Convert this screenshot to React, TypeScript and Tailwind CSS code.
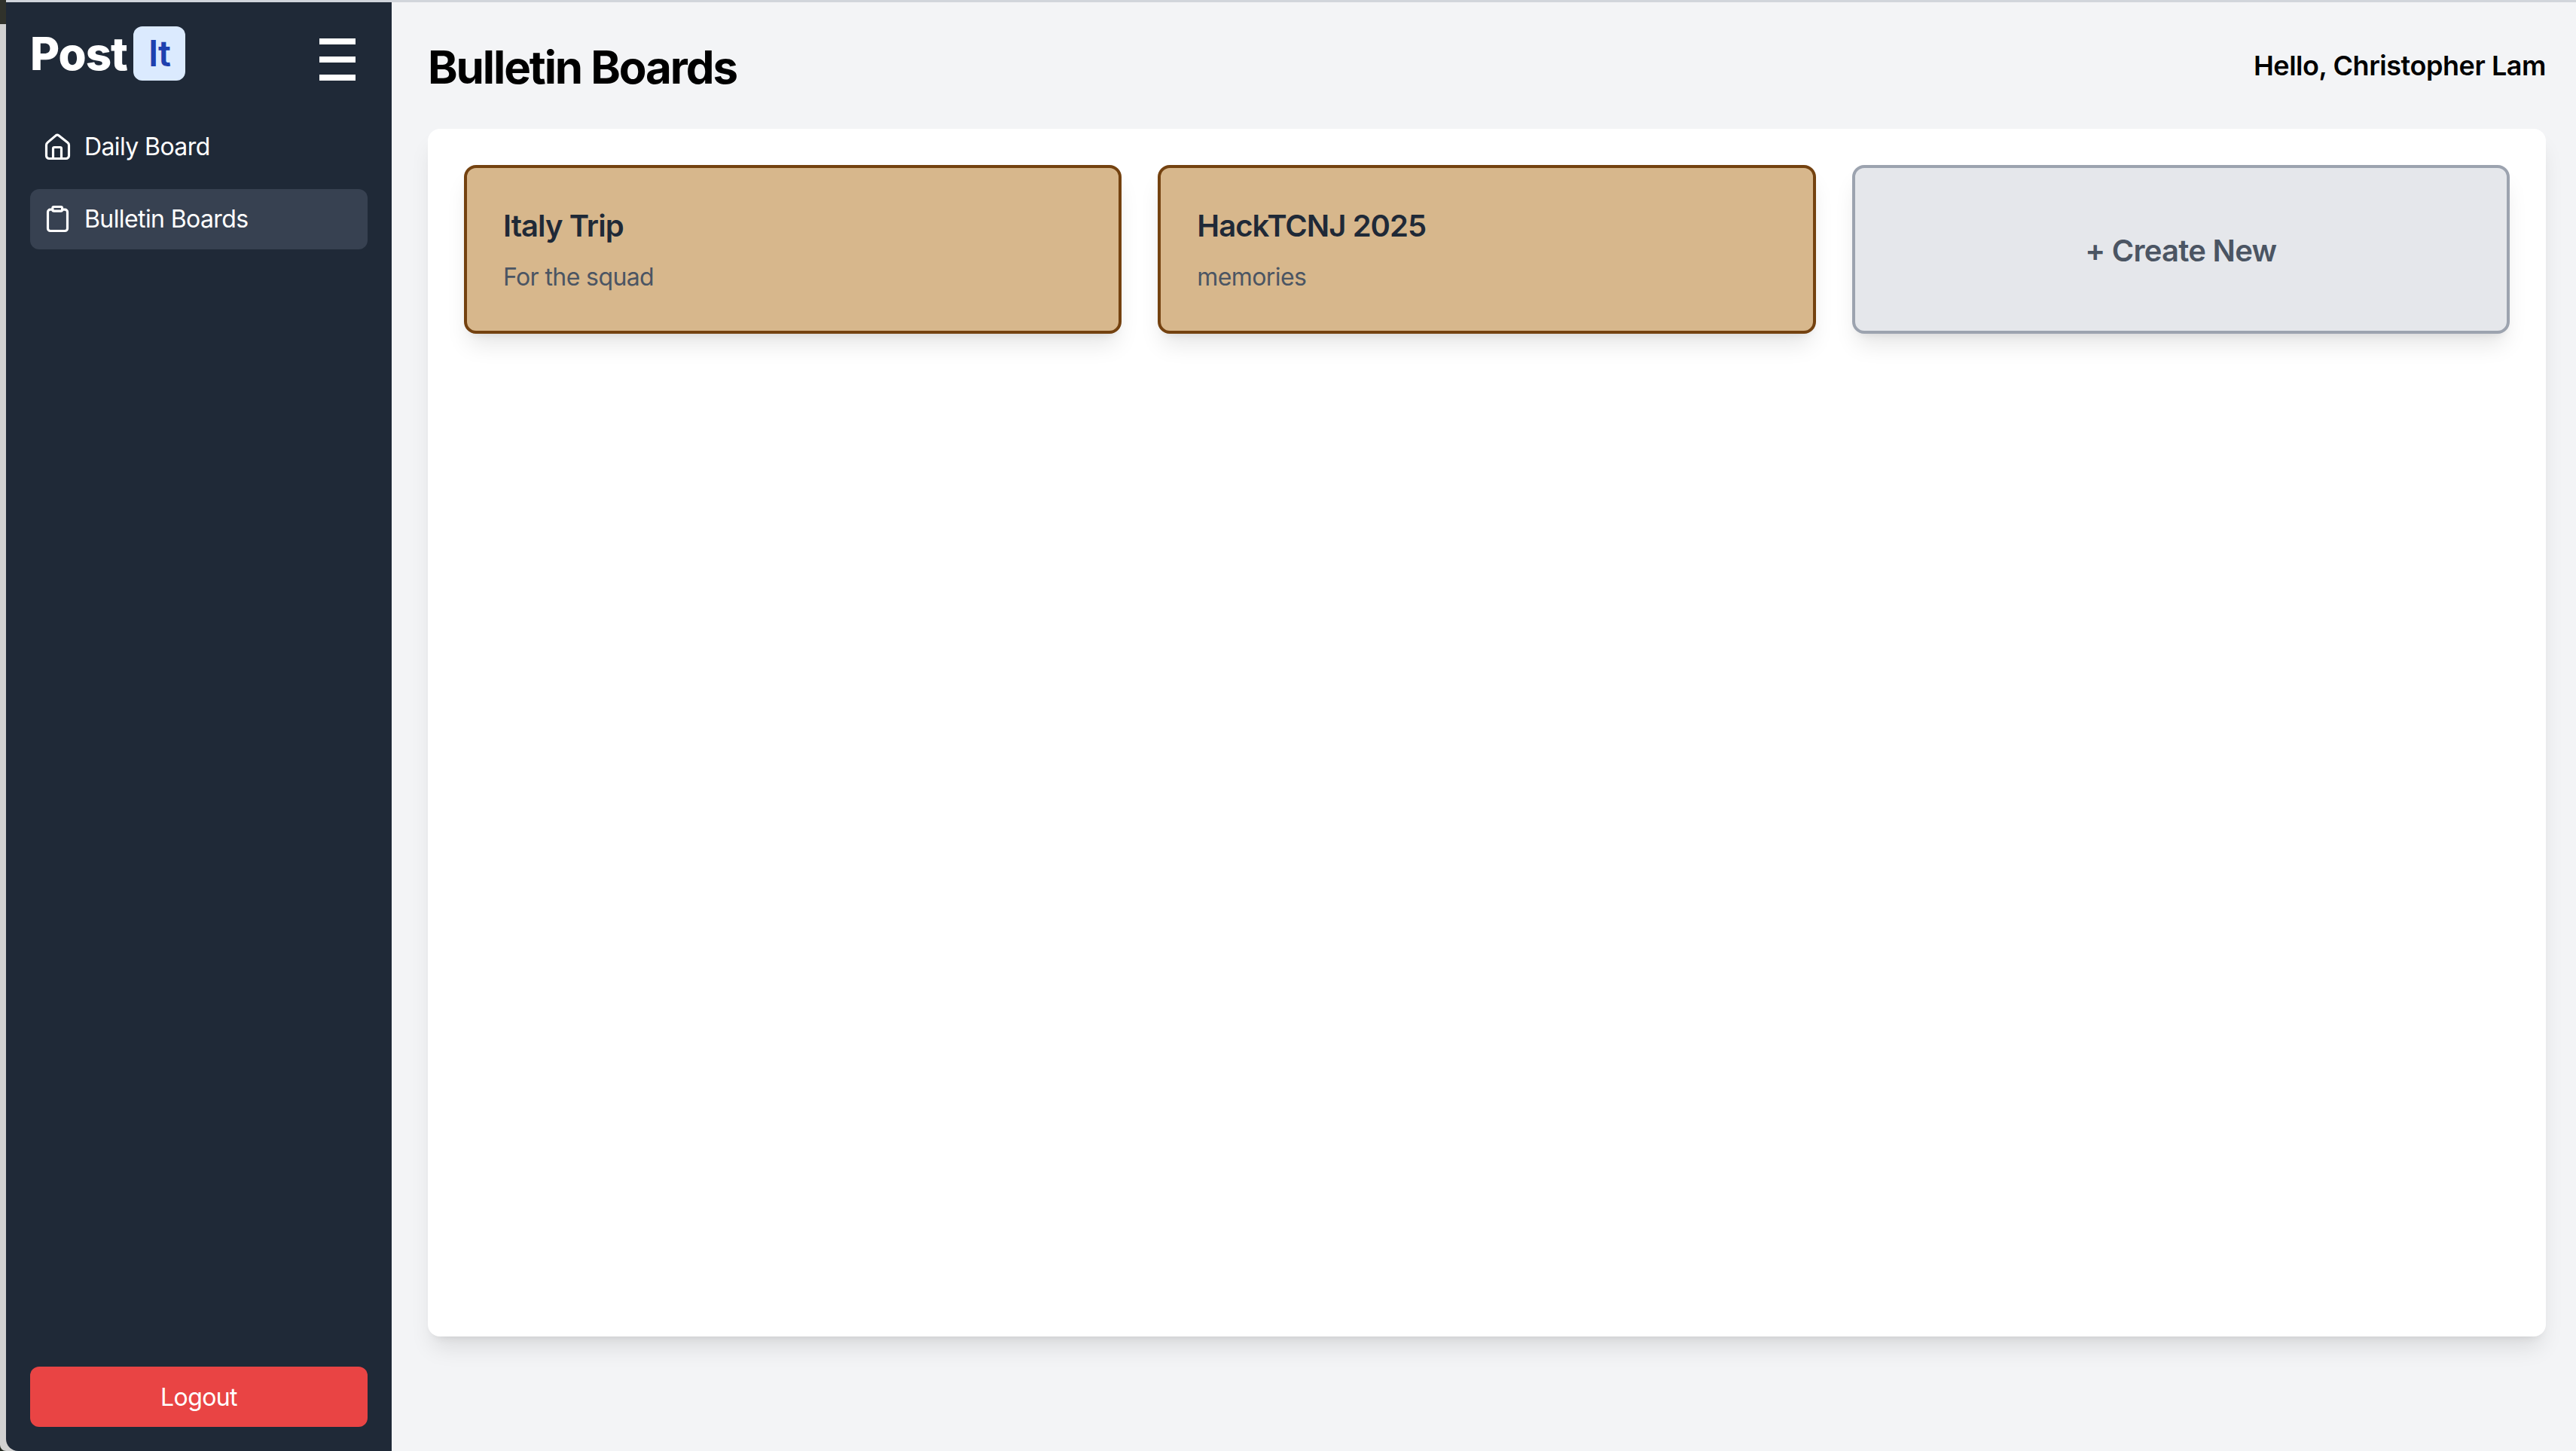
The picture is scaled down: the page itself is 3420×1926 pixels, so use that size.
const font = "[font-family:Inter,'Liberation_Sans',sans-serif]";
const shadow = "shadow-[0_20px_30px_-6px_rgba(0,0,0,0.1),0_8px_12px_-8px_rgba(0,0,0,0.1)]";

function HomeIcon() {
  return (
    <svg viewBox="0 0 24 24" fill="none" stroke="currentColor" strokeWidth="1.9" strokeLinecap="round" strokeLinejoin="round" className="h-10 w-10 shrink-0">
      <path d="M10.9 2.9a1.8 1.8 0 0 1 2.2 0l7.2 5.6a2.5 2.5 0 0 1 1 2V19a2.3 2.3 0 0 1-2.3 2.3H5.6A2.3 2.3 0 0 1 3.3 19v-8.5a2.5 2.5 0 0 1 1-2z" />
      <path d="M8.7 21.3v-8a1 1 0 0 1 1-1h4.6a1 1 0 0 1 1 1v8" />
    </svg>
  );
}

function ClipboardIcon() {
  return (
    <svg viewBox="0 0 24 24" fill="none" stroke="currentColor" strokeWidth="1.9" strokeLinecap="round" strokeLinejoin="round" className="h-10 w-10 shrink-0">
      <rect x="8.3" y="2.1" width="7.6" height="3.4" rx="1" />
      <path d="M8.3 4.3H6.5a2 2 0 0 0-2 2v13a2 2 0 0 0 2 2h11.6a2 2 0 0 0 2-2v-13a2 2 0 0 0-2-2h-2.2" />
    </svg>
  );
}

function Card({ title, desc }: { title: string; desc: string }) {
  return (
    <div className={`flex h-[224px] flex-col rounded-2xl border-4 border-[#744210] bg-[#d7b78c] p-12 pt-[49px] ${shadow}`}>
      <h2 className="text-[40px] leading-[56px] font-semibold tracking-[-0.95px] text-[#1f2937]">{title}</h2>
      <p className="mt-5 text-[32px] leading-[40px] tracking-[-0.6px] text-[#4b5563]">{desc}</p>
    </div>
  );
}

export default function App() {
  return (
    <div className={`flex h-[1926px] w-[3420px] overflow-hidden bg-[#23281f] ${font}`}>
      <div className="flex w-2 flex-col">
        <div className="h-8 bg-[#30322b]" />
        <div className="flex-1 rounded-bl-lg bg-[#d1d1d1]" />
      </div>
      <div className="flex flex-1 flex-col">
        <div className="h-[3px] bg-[#d1d5db]" />
        <div className="flex flex-1 bg-[#d1d1d1]">
          <aside className="flex w-[512px] flex-col rounded-bl-2xl bg-[#1f2937] px-8 pb-8 text-white">
            <div className="flex h-[152px] items-start justify-between pt-8">
              <div className="flex items-center gap-2">
                <span className="text-[60px] leading-[72px] font-extrabold tracking-[-1px]">Post</span>
                <span className="rounded-xl bg-[#dbeafe] px-5 text-[48px] leading-[72px] font-semibold tracking-[-1px] text-[#1e40af]">It</span>
              </div>
              <div className="mt-4 mr-4 flex w-12 flex-col gap-4">
                <div className="h-2 bg-white" />
                <div className="h-2 bg-white" />
                <div className="h-2 bg-white" />
              </div>
            </div>
            <nav className="flex flex-col gap-4">
              <a className="flex h-20 items-center gap-4 rounded-xl px-4 text-[32px] tracking-[-0.6px]"><HomeIcon />Daily Board</a>
              <a className="flex h-20 items-center gap-4 rounded-xl bg-[#374151] px-4 text-[32px] tracking-[-0.6px]"><ClipboardIcon />Bulletin Boards</a>
            </nav>
            <button className="mt-auto h-20 rounded-xl bg-[#e94444] pt-0.5 text-[32px] tracking-[-0.6px] text-white">Logout</button>
          </aside>
          <main className="flex flex-1 flex-col bg-[#f3f4f6] pr-10 pl-12">
            <header className="flex h-[168px] items-center justify-between">
              <h1 className="mt-1 text-[60px] font-bold tracking-[-2.1px] text-black">Bulletin Boards</h1>
              <span className="text-[36px] font-semibold tracking-[-0.45px] text-black">Hello, Christopher Lam</span>
            </header>
            <section className={`h-[1603px] rounded-2xl bg-white p-12 ${shadow}`}>
              <div className="grid grid-cols-3 gap-12">
                <Card title="Italy Trip" desc="For the squad" />
                <Card title="HackTCNJ 2025" desc="memories" />
                <div className={`flex h-[224px] items-center justify-center rounded-2xl border-4 border-[#9ca3af] bg-[#e5e7eb] pt-1 text-[40px] font-semibold tracking-[-0.75px] text-[#4b5563] ${shadow}`}>+ Create New</div>
              </div>
            </section>
          </main>
        </div>
      </div>
    </div>
  );
}
